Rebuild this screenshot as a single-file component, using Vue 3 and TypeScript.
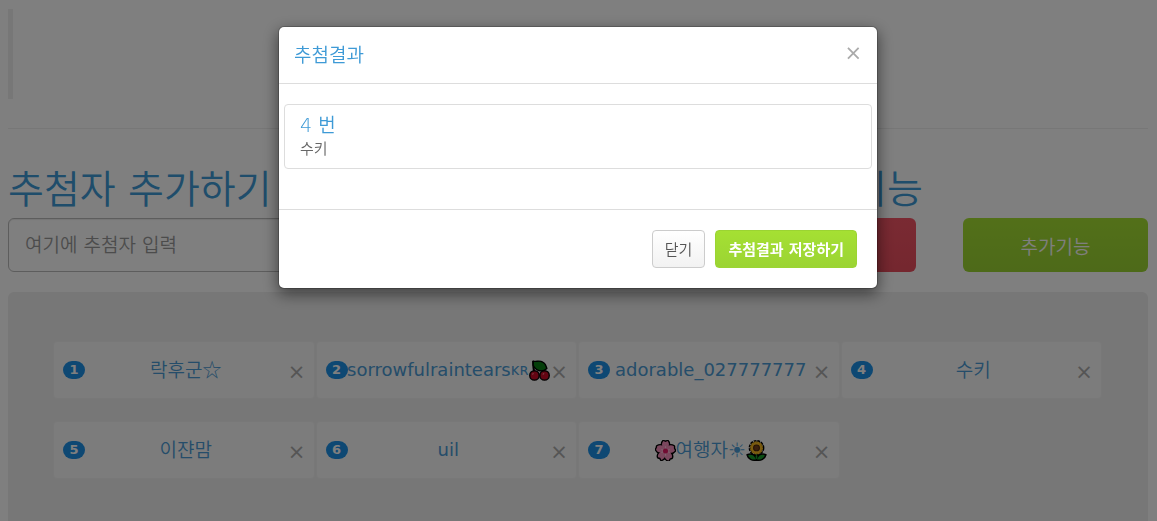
<script setup lang="ts">
import { ref } from 'vue'

interface Entrant {
  id: number
  name: string
  latin?: boolean
  tag?: string
  mark?: string
  before?: 'blossom'
  after?: 'cherry' | 'sunflower'
}

const newName = ref('')
const showResult = ref(true)
const entrants = ref<Entrant[]>([
  { id: 1, name: '락후군☆' },
  { id: 2, name: 'sorrowfulraintears', latin: true, tag: 'ᴋʀ', after: 'cherry' },
  { id: 3, name: 'adorable_027777777', latin: true },
  { id: 4, name: '수키' },
  { id: 5, name: '이쟌맘' },
  { id: 6, name: 'uil', latin: true },
  { id: 7, name: '여행자', mark: '☀\uFE0E', before: 'blossom', after: 'sunflower' },
])
const winner = { id: 4, name: '수키' }

function removeEntrant(id: number) {
  entrants.value = entrants.value.filter((e) => e.id !== id)
}
</script>

<template>
  <div class="page">
    <blockquote class="notice"></blockquote>
    <hr class="rule" />

    <main>
      <div class="controls">
        <section>
          <h1><label for="entrant">추첨자 추가하기</label></h1>
          <input id="entrant" v-model="newName" class="entry" type="text" placeholder="여기에 추첨자 입력" />
        </section>
        <section>
          <h1>추첨자 기능</h1>
          <button type="button" class="big red" aria-label="추첨하기" @click="showResult = true"></button>
        </section>
        <section class="last">
          <button type="button" class="big green">추가기능</button>
        </section>
      </div>

      <ul class="panel">
        <li v-for="e in entrants" :key="e.id" class="card">
          <span class="badge">{{ e.id }}</span>
          <span class="name" :class="{ latin: e.latin }">
            <svg v-if="e.before === 'blossom'" class="emoji" viewBox="0 0 20 20" aria-hidden="true">
              <g fill="#f7a5c8" stroke="#000" stroke-width="2.6" stroke-linejoin="round">
                <path d="M10 10C6 7 6 3 8 1l2 1 2-1c2 2 2 6-2 9z" />
                <path d="M10 10c1-5 5-6 8-4v2l1 2c-2 3-6 3-9 0z" />
                <path d="M10 10c5 1 7 4 6 7l-2 .5-1 2c-4-1-5-5-3-9.5z" />
                <path d="M10 10c1 5-1 8-4 9l-1-2-2-.5c-1-3 2-6 7-6.5z" />
                <path d="M10 10c-4 3-8 2-9-1l1-2V6c3-2 7-1 8 4z" />
              </g>
              <g fill="#f48fbb">
                <path d="M10 10C6 7 6 3 8 1l2 1 2-1c2 2 2 6-2 9z" />
                <path d="M10 10c1-5 5-6 8-4v2l1 2c-2 3-6 3-9 0z" />
                <path d="M10 10c5 1 7 4 6 7l-2 .5-1 2c-4-1-5-5-3-9.5z" />
                <path d="M10 10c1 5-1 8-4 9l-1-2-2-.5c-1-3 2-6 7-6.5z" />
                <path d="M10 10c-4 3-8 2-9-1l1-2V6c3-2 7-1 8 4z" />
                <circle cx="10" cy="10.5" r="5" />
              </g>
              <path d="M10 6v9M6 9l8 3M14 9l-8 3" stroke="#ffc4dc" stroke-width="1" />
              <circle cx="10" cy="10.5" r="2.4" fill="#e21864" />
            </svg>
            <span>{{ e.name }}</span><span v-if="e.tag" class="tag">{{ e.tag }}</span><span v-if="e.mark" class="mark">{{ e.mark }}</span>
            <svg v-if="e.after === 'cherry'" class="emoji" viewBox="0 0 20 20" aria-hidden="true">
              <path d="M4 1c0 4 0 7 1 10M5 4c4 3 8 4 10 8" fill="none" stroke="#000" stroke-width="2" />
              <path d="M4 1c3 1 6-1 9 1 3 1 3 4 4 6-4 4-10 3-13-3z" fill="#0a7d14" stroke="#000" stroke-width="1.3" stroke-linejoin="round" />
              <circle cx="5.2" cy="14.7" r="4.5" fill="#c80a26" stroke="#000" stroke-width="1.3" />
              <circle cx="14.8" cy="14.7" r="4.5" fill="#c80a26" stroke="#000" stroke-width="1.3" />
              <path d="M3.5 13.5l.5-.5M13.5 13.5l.5-.5" stroke="#f27c88" stroke-width="1.2" stroke-linecap="round" />
            </svg>
            <svg v-if="e.after === 'sunflower'" class="emoji" viewBox="0 0 20 20" aria-hidden="true">
              <path d="M10 12v6" stroke="#000" stroke-width="4" />
              <path d="M10 18C8 13 4 13 1 14c1 4 5 6 9 5 4 1 8-1 9-5-3-1-7-1-9 4z" fill="#169b28" stroke="#000" stroke-width="1.4" stroke-linejoin="round" />
              <path d="M10 12v6" stroke="#169b28" stroke-width="1.6" />
              <circle cx="10" cy="7.5" r="6" fill="#f6b820" stroke="#000" stroke-width="3" stroke-dasharray="2.4 .74" />
              <circle cx="10" cy="7.5" r="5.4" fill="#f6b820" stroke="#f6b820" stroke-width="1.6" stroke-dasharray="1.9 .93" />
              <circle cx="10" cy="7.5" r="2.8" fill="#76401b" stroke="#4b270d" />
            </svg>
          </span>
          <button type="button" class="close" :aria-label="`${e.name} 삭제`" @click="removeEntrant(e.id)">×</button>
        </li>
      </ul>
    </main>

    <div v-if="showResult" class="backdrop">
      <div class="modal" role="dialog" aria-modal="true" aria-labelledby="result-title">
        <header class="modal-header">
          <h2 id="result-title">추첨결과</h2>
          <button type="button" class="close" aria-label="닫기" @click="showResult = false">×</button>
        </header>
        <div class="modal-body">
          <div class="result">
            <h3>{{ winner.id }} 번</h3>
            <p>{{ winner.name }}</p>
          </div>
        </div>
        <footer class="modal-footer">
          <button type="button" class="btn plain" @click="showResult = false">닫기</button>
          <button type="button" class="btn save">추첨결과 저장하기</button>
        </footer>
      </div>
    </div>
  </div>
</template>

<style>
body {
  margin: 0;
  background: #fff;
}
</style>

<style scoped>
* {
  box-sizing: border-box;
}
.page {
  height: 100vh;
  overflow: hidden;
  padding: 9px 9px 0 8px;
  font-family: 'DejaVu Sans', 'Noto Sans CJK KR', sans-serif;
  font-size: 14px;
  color: #666;
}
button,
input {
  font-family: inherit;
}
h1,
h2,
h3 {
  margin: 0;
  font-weight: 350;
  color: #3e9ad6;
}
.notice {
  margin: 0;
  height: 90px;
  border-left: 5px solid #eee;
}
.rule {
  margin: 29px 0 39px;
  border: 0;
  border-top: 1px solid #eee;
}
.controls {
  display: grid;
  grid-template-columns: 1fr 185px 185px;
  gap: 47px;
}
h1 {
  font-size: 39px;
  line-height: 44px;
  height: 44px;
  margin-bottom: 6px;
  white-space: nowrap;
}
.last {
  align-self: end;
}
.entry {
  display: block;
  width: 100%;
  height: 54px;
  padding: 10px 16px;
  border: 1px solid #bbb;
  border-radius: 6px;
  background: #fff;
  box-shadow: inset 0 1px 1px rgba(0, 0, 0, 0.08);
  font-size: 19px;
  font-weight: 350;
  color: #555;
}
.entry::placeholder {
  color: #999;
  opacity: 1;
}
.big {
  display: block;
  width: 100%;
  height: 54px;
  padding: 0;
  border: 0;
  border-radius: 6px;
  font-size: 19px;
  font-weight: 350;
  color: #fff;
}
.red {
  background: linear-gradient(#f45566, #ea4e5e);
}
.green,
.save {
  background: linear-gradient(#a5e033, #9bd433);
}
.panel {
  display: grid;
  grid-template-columns: repeat(4, 1fr);
  align-content: start;
  gap: 22px 1px;
  min-height: 300px;
  margin: 20px 0 0;
  padding: 49px 46px 48px 45px;
  list-style: none;
  border-radius: 6px;
  background: #eee;
}
.card {
  display: grid;
  grid-template-columns: 22px 1fr 20px;
  align-items: center;
  min-width: 0;
  height: 58px;
  padding: 0 7px 0 9px;
  border: 1px solid #f1f1f1;
  border-radius: 4px;
  background: #f8f8f8;
}
.badge {
  padding: 2px 0;
  border-radius: 10px;
  background: #1c90e6;
  color: #fff;
  font-size: 13px;
  font-weight: 700;
  line-height: 14px;
  text-align: center;
}
.name {
  display: flex;
  justify-content: center;
  align-items: center;
  min-width: 0;
  font-size: 19px;
  line-height: 24px;
  white-space: nowrap;
  font-weight: 350;
  color: #4a9ad4;
}
.name.latin {
  font-size: 18px;
  font-weight: 400;
}
.tag {
  font-size: 15px;
}
.mark {
  font-size: 20px;
  font-weight: 400;
}
.emoji {
  flex: none;
  width: 21px;
  height: 21px;
}
.close {
  padding: 0;
  border: 0;
  background: none;
  font-size: 21px;
  line-height: 22px;
  color: #aaa;
}
.card .close {
  padding-top: 4px;
}
.backdrop {
  position: fixed;
  inset: 0;
  display: flex;
  justify-content: center;
  align-items: flex-start;
  padding: 26px 1px 0 0;
  background: rgba(0, 0, 0, 0.5);
}
.modal {
  width: 600px;
  max-width: 100%;
  border: 1px solid rgba(0, 0, 0, 0.2);
  border-radius: 6px;
  background: #fff;
  background-clip: padding-box;
  box-shadow: 0 5px 15px rgba(0, 0, 0, 0.5);
}
.modal-header {
  display: flex;
  justify-content: space-between;
  align-items: flex-start;
  padding: 15px;
  border-bottom: 1px solid #ddd;
}
h2 {
  height: 26px;
  font-size: 19px;
  line-height: 26px;
}
h3 {
  height: 24px;
  font-size: 19px;
  line-height: 24px;
}
.modal-body {
  padding: 20px 5px 40px;
}
.result {
  padding: 8px 15px;
  border: 1px solid #ddd;
  border-radius: 4px;
}
.result p {
  margin: 0;
  height: 23px;
  font-size: 15px;
  font-weight: 350;
  line-height: 25px;
}
.modal-footer {
  display: flex;
  justify-content: flex-end;
  gap: 10px;
  padding: 20px;
  border-top: 1px solid #ddd;
}
.btn {
  height: 38px;
  padding: 0 12px 2px;
  border: 1px solid #ccc;
  border-radius: 4px;
  font-size: 15px;
  white-space: nowrap;
}
.plain {
  background: linear-gradient(#fff, #f2f2f2);
  font-weight: 350;
  color: #555;
}
.save {
  border-color: #9bd433;
  color: #fff;
  font-weight: 700;
}
</style>
